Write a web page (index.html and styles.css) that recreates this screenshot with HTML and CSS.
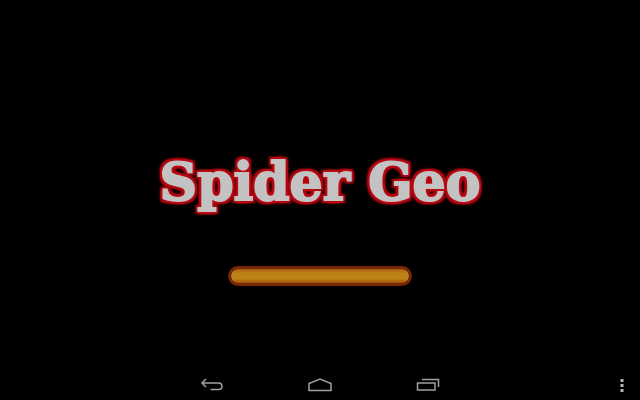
FILE: index.html
```html
<!DOCTYPE html>
<html lang="en">
<head>
  <meta charset="UTF-8" />
  <meta name="viewport" content="width=device-width, initial-scale=1.0" />
  <title>Spider Geo</title>
  <link rel="stylesheet" href="styles.css">
</head>
<body>
  <!-- Splash -->
  <main class="splash">
    <h1 class="title">Spider Geo</h1>
    <progress class="loader" value="100" max="100" aria-label="Loading"></progress>
  </main>

  <!-- System bar -->
  <nav class="system-bar">
    <div class="nav-buttons">
      <button type="button" class="nav-button" aria-label="Back">
        <svg width="24" height="14" viewBox="0 0 24 14">
          <path d="M6 1 L2 5 L6 9 M2 5 H18.500 Q22 5 22 8.500 Q22 11.500 18.500 11.500 H10.500" />
        </svg>
      </button>
      <button type="button" class="nav-button" aria-label="Home">
        <svg width="24" height="14" viewBox="0 0 24 14">
          <path d="M1 12.500 V5.500 L12 1 L23 5.500 V12.500 Z" />
        </svg>
      </button>
      <button type="button" class="nav-button" aria-label="Recent apps">
        <svg width="24" height="14" viewBox="0 0 24 14">
          <path d="M1.500 5 H19 V12 H1.500 Z M6 1.500 H22.500 V9" />
        </svg>
      </button>
    </div>
    <button type="button" class="menu-button" aria-label="Menu">
      <svg width="4" height="14" viewBox="0 0 4 14">
        <path d="M0.500 1 h3 v3 h-3 Z M0.500 6 h3 v3 h-3 Z M0.500 11 h3 v3 h-3 Z" />
      </svg>
    </button>
  </nav>
</body>
</html>
```

FILE: styles.css
```css
body {
  margin: 0;
  min-height: 100vh;
  display: flex;
  flex-direction: column;
  background-color: #000;
  font-family: "DejaVu Serif", serif;
}
.splash {
  flex: 1;
  display: flex;
  flex-direction: column;
  align-items: center;
  justify-content: center;
  gap: 52px;
  padding-top: 66px;
}
.title {
  margin: 0;
  font-size: 52px;
  line-height: 64px;
  font-weight: bold;
  color: #c3c3c3;
  white-space: nowrap;
  -webkit-text-stroke: 2px #c3c3c3;
  text-shadow:
    3px 0 1px #b90812,
    -3px 0 1px #b90812,
    0 3px 1px #b90812,
    0 -3px 1px #b90812,
    3px 3px 2px #b90812,
    -3px 3px 2px #b90812,
    3px -3px 2px #b90812,
    -3px -3px 2px #b90812,
    0 0 6px #b90812;
}
.loader {
  appearance: none;
  box-sizing: border-box;
  width: 184px;
  height: 20px;
  border: 3px solid #742806;
  border-radius: 10px;
  background-color: #742806;
  overflow: hidden;
}
.loader::-webkit-progress-bar {
  border-radius: 7px;
  background-color: #742806;
}
.loader::-webkit-progress-value {
  border-radius: 7px;
  background: linear-gradient(#a65b10, #bd8018 25%, #bd8415 70%, #9c4f0b);
}
.system-bar {
  display: grid;
  grid-template-columns: 1fr auto 1fr;
  align-items: center;
  height: 30px;
}
.nav-buttons {
  grid-column: 2;
  display: flex;
}
.nav-button {
  display: flex;
  justify-content: center;
  width: 108px;
  padding: 8px 0;
  border: none;
  background: none;
  cursor: pointer;
}
.nav-button path {
  fill: none;
  stroke: #a0a0a0;
  stroke-width: 1.5;
}
.menu-button {
  display: flex;
  justify-self: end;
  padding: 8px 16px;
  border: none;
  background: none;
  cursor: pointer;
}
.menu-button path {
  fill: #b5b5b5;
}
```
